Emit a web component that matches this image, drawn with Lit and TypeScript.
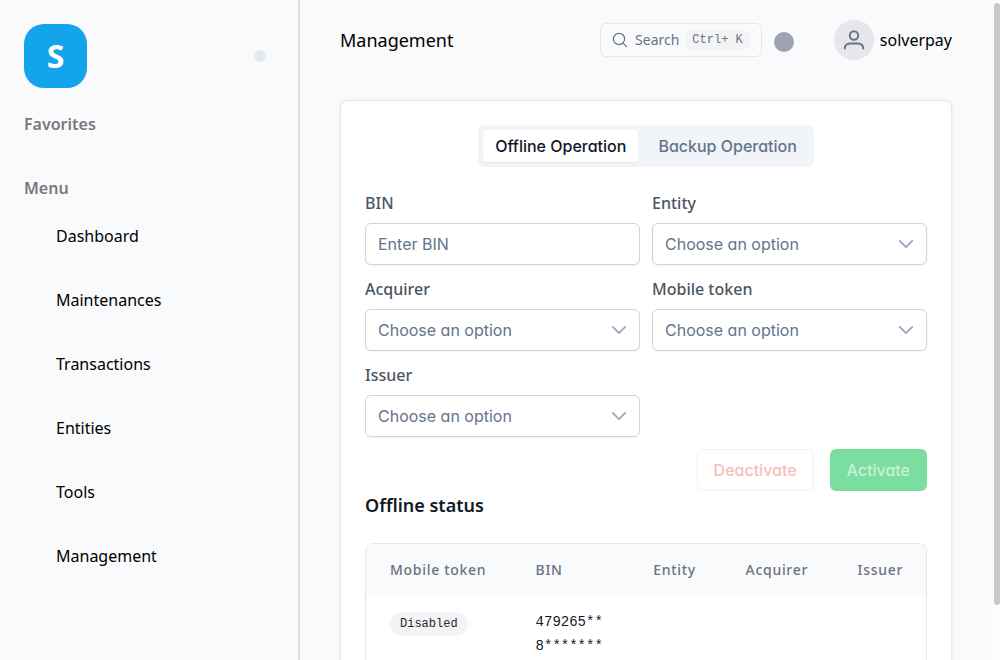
import { LitElement, html, css } from "lit";
import { customElement } from "lit/decorators.js";

const menu = ["Dashboard", "Maintenances", "Transactions", "Entities", "Tools", "Management"];
const selects = [
  { id: "entity", label: "Entity" },
  { id: "acquirer", label: "Acquirer" },
  { id: "mobile-token", label: "Mobile token" },
  { id: "issuer", label: "Issuer" },
];

@customElement("app-root")
export class AppRoot extends LitElement {
  static styles = css`
    :host {
      display: grid;
      grid-template-columns: 300px minmax(0, 1fr) 8px;
      height: 100vh;
      overflow: hidden;
      background: #f9fafc;
      color: #000;
      font: 400 16px/24px "Noto Sans", sans-serif;
      --ui: "Inter", sans-serif;
      --mono: "Liberation Mono", monospace;
    }
    * { box-sizing: border-box; }
    h1, h2, p, ul { margin: 0; padding: 0; }
    button, input, select { font: inherit; color: inherit; margin: 0; }
    a { color: inherit; text-decoration: none; }

    .sidebar {
      border-right: 2px solid #dfe1e4;
      padding: 24px 32px 24px 24px;
    }
    .brand {
      display: flex;
      align-items: center;
      justify-content: space-between;
      margin-bottom: 24px;
    }
    .logo {
      display: grid;
      place-items: center;
      width: 63px;
      height: 64px;
      border-radius: 20px;
      background: #14a4ed;
      color: #fff;
      font-size: 32px;
      font-weight: 700;
    }
    .dot {
      width: 12px;
      height: 12px;
      padding: 0;
      border: 0;
      border-radius: 50%;
      background: #e2e8f0;
    }
    .section { color: #78787a; font-size: 16px; line-height: 24px; font-weight: 600; }
    .favorites { margin-bottom: 40px; }
    .menu { list-style: none; display: grid; gap: 16px; margin-top: 12px; }
    .menu a { display: block; padding: 12px 32px; }

    .main { overflow: hidden; padding: 0 40px; }
    .topbar { display: flex; align-items: center; height: 80px; margin-bottom: 20px; }
    .title { flex: 1; font-size: 18px; line-height: 28px; font-weight: 400; }
    .search {
      display: flex;
      align-items: center;
      gap: 7px;
      height: 34px;
      padding: 0 12px 0 11px;
      border: 1px solid #e5e7eb;
      border-radius: 6px;
      background: none;
      color: #6b7280;
      font-size: 14px;
      line-height: 20px;
    }
    .search svg { width: 16px; height: 16px; }
    .kbd {
      padding: 0 6px;
      border-radius: 4px;
      background: #f3f4f6;
      font: 400 12px/20px var(--mono);
      white-space: pre;
    }
    .theme {
      width: 20px;
      height: 20px;
      margin: 4px 40px 0 12px;
      padding: 0;
      border: 0;
      border-radius: 50%;
      background: #9ca3af;
    }
    .user { display: flex; align-items: center; gap: 6px; }
    .avatar {
      display: grid;
      place-items: center;
      width: 40px;
      height: 40px;
      border-radius: 50%;
      background: #e5e7eb;
      color: #6b7280;
    }

    .card {
      display: flex;
      flex-direction: column;
      padding: 24px;
      border: 1px solid #e5e7eb;
      border-radius: 8px;
      background: #fff;
      box-shadow: 0 1px 3px rgba(0, 0, 0, 0.1);
    }
    .tabs {
      align-self: center;
      display: flex;
      padding: 5px;
      border-radius: 6px;
      background: #f1f5f9;
      margin-bottom: 24px;
    }
    .tab {
      padding: 4px 12px;
      border: 0;
      border-radius: 4px;
      background: none;
      color: #64748b;
      font-family: var(--ui);
      font-feature-settings: "cv11";
      font-weight: 500;
      white-space: nowrap;
    }
    .tab + .tab { margin-left: 8px; }
    .active { background: #fff; color: #0f172a; box-shadow: 0 1px 2px rgba(0, 0, 0, 0.05); }

    .fields { display: grid; grid-template-columns: repeat(2, minmax(0, 1fr)); gap: 12px; }
    .field { display: grid; gap: 8px; }
    .field label { color: #4b5563; font-weight: 500; }
    .control {
      width: 100%;
      height: 42px;
      padding: 0 12px;
      border: 1px solid #cbd5e1;
      border-radius: 6px;
      background: #fff;
      color: #64748b;
      font-family: var(--ui);
      font-feature-settings: "cv11";
      box-shadow: 0 1px 2px rgba(0, 0, 0, 0.05);
      appearance: none;
      outline: none;
    }
    .control::placeholder { color: #64748b; opacity: 1; }
    .picker { display: grid; align-items: center; }
    .picker > * { grid-area: 1 / 1; }
    .chevron { justify-self: end; margin-right: 11px; color: #94a3b8; pointer-events: none; }

    .actions { display: flex; justify-content: flex-end; gap: 16px; margin-top: 12px; }
    .action {
      height: 42px;
      padding: 0 16px;
      border: 1px solid transparent;
      border-radius: 6px;
      font-family: var(--ui);
      font-feature-settings: "cv11";
      font-weight: 500;
    }
    .deactivate { border-color: #fdecec; background: #fff; color: #f9bcbc; }
    .activate { background: #7bdea0; color: #c6f2d7; }

    .subtitle { font-size: 18px; line-height: 28px; font-weight: 600; color: #111827; margin-bottom: 24px; }
    .frame { border: 1px solid #e5e7eb; border-radius: 8px; overflow: hidden; }
    table { width: 100%; border-collapse: collapse; table-layout: fixed; }
    .c1 { width: 26%; }
    .c2 { width: 21%; }
    .c3 { width: 16.5%; }
    .c4 { width: 20%; }
    .c5 { width: 16.5%; }
    th {
      padding: 16px 0 16px 24px;
      background: #f9fafb;
      color: #6b7280;
      font-size: 14px;
      line-height: 20px;
      font-weight: 500;
      letter-spacing: 0.05em;
      text-align: left;
      white-space: nowrap;
    }
    td { padding: 14px 24px; vertical-align: top; color: #111827; }
    .bin { font: 400 14px/24px var(--mono); word-break: break-all; }
    .status { padding-top: 16px; }
    .badge {
      display: block;
      width: fit-content;
      padding: 0 10px;
      border-radius: 12px;
      background: #f3f4f6;
      color: #1f2937;
      font: 400 12px/24px var(--mono);
    }

    .track { background: #fcfcfc; padding: 3px 0 0 2px; }
    .thumb { height: 602px; max-height: 92vh; border-radius: 3px; background: #c9c9c9; }
  `;

  render() {
    const [entity, acquirer, token, issuer] = selects.map((s) => this.picker(s.id, s.label));
    return html`
      <aside class="sidebar">
        <div class="brand">
          <div class="logo">S</div>
          <button class="dot" aria-label="Collapse sidebar"></button>
        </div>
        <h2 class="section favorites">Favorites</h2>
        <h2 class="section">Menu</h2>
        <ul class="menu">
          ${menu.map((item) => html`<li><a href="#">${item}</a></li>`)}
        </ul>
      </aside>

      <main class="main">
        <header class="topbar">
          <h1 class="title">Management</h1>
          <button class="search">
            <svg viewBox="0 0 16 16" fill="none" stroke="currentColor" stroke-width="1.2" stroke-linecap="round">
              <circle cx="7" cy="7" r="5.6" />
              <path d="M11.1 11.1 14.6 14.6" />
            </svg>
            <span>Search</span>
            <span class="kbd">Ctrl+ K</span>
          </button>
          <button class="theme" aria-label="Toggle theme"></button>
          <div class="user">
            <span class="avatar">
              <svg width="22" height="22" viewBox="0 0 22 22" fill="none" stroke="currentColor" stroke-width="2" stroke-linecap="round">
                <circle cx="11" cy="6.5" r="4.2" />
                <path d="M1.8 19.4v-.6c0-2.6 2.8-4.4 6.2-4.4h6c3.4 0 6.2 1.8 6.2 4.4v.6" />
              </svg>
            </span>
            <span>solverpay</span>
          </div>
        </header>

        <section class="card">
          <div class="tabs" role="tablist">
            <button class="tab active" role="tab" aria-selected="true">Offline Operation</button>
            <button class="tab" role="tab" aria-selected="false">Backup Operation</button>
          </div>

          <div class="fields">
            <div class="field">
              <label for="bin">BIN</label>
              <input class="control" id="bin" type="text" placeholder="Enter BIN" />
            </div>
            ${entity} ${acquirer} ${token} ${issuer}
          </div>

          <div class="actions">
            <button class="action deactivate" disabled>Deactivate</button>
            <button class="action activate" disabled>Activate</button>
          </div>

          <h2 class="subtitle">Offline status</h2>
          <div class="frame">
            <table>
              <colgroup>
                <col class="c1" /><col class="c2" /><col class="c3" /><col class="c4" /><col class="c5" />
              </colgroup>
              <thead>
                <tr>
                  <th>Mobile token</th><th>BIN</th><th>Entity</th><th>Acquirer</th><th>Issuer</th>
                </tr>
              </thead>
              <tbody>
                <tr>
                  <td class="status"><span class="badge">Disabled</span></td>
                  <td class="bin">479265**8*******</td>
                  <td></td><td></td><td></td>
                </tr>
              </tbody>
            </table>
          </div>
        </section>
      </main>

      <div class="track"><div class="thumb"></div></div>
    `;
  }

  private picker(id: string, label: string) {
    return html`
      <div class="field">
        <label for=${id}>${label}</label>
        <div class="picker">
          <select class="control" id=${id}>
            <option>Choose an option</option>
          </select>
          <svg class="chevron" width="20" height="20" viewBox="0 0 24 24" fill="none" stroke="currentColor" stroke-width="2" stroke-linecap="round" stroke-linejoin="round">
            <path d="m19.5 8.25-7.5 7.5-7.5-7.5" />
          </svg>
        </div>
      </div>
    `;
  }
}
